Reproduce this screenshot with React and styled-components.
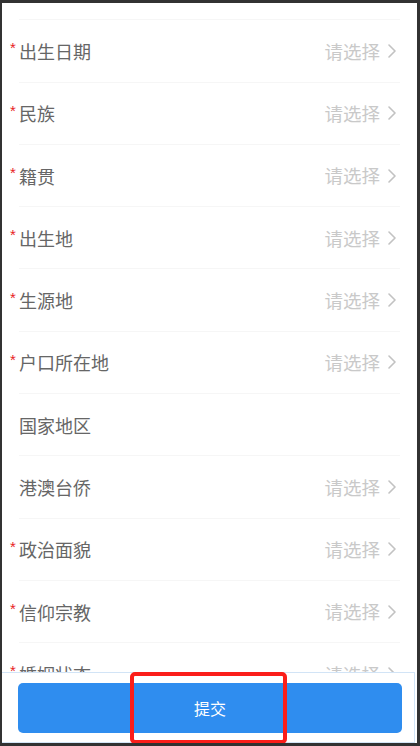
import React, { useLayoutEffect, useRef } from 'react';
import styled, { createGlobalStyle } from 'styled-components';

const GlobalStyle = createGlobalStyle`
    html, body {
        margin: 0;
        padding: 0;
        background-color: #323232;
    }
    * {
        box-sizing: border-box;
    }
`;

const Screen = styled.div`
    position: relative;
    height: 100vh;
    display: flex;
    flex-direction: column;
    background-color: #fff;
    border-style: solid;
    border-color: #323232;
    border-width: 3px 3px 3px 2px;
    font-family: "Noto Sans CJK SC", "Noto Sans", sans-serif;
    overflow: hidden;
`;

const FormList = styled.div`
    flex: 1;
    overflow-y: auto;
    scrollbar-width: none;

    &::-webkit-scrollbar {
        display: none;
    }
`;

const RowWrap = styled.div`
    padding: 0 17px 0 16.5px;
`;

const Row = styled.div`
    height: 62.3px;
    display: flex;
    align-items: center;
    padding: 0 4px 0 0.5px;
    border-bottom: 1px solid #f6f6f6;
`;

const Label = styled.div`
    flex: 1;
    display: flex;
    align-items: center;
    font-size: 18px;
    color: #666;
    line-height: 1;
`;

const Star = styled.span`
    display: inline-block;
    width: 9px;
    margin-left: -9px;
    margin-top: -6px;
    font-size: 15px;
    color: #e8221d;
    line-height: 1;
    font-family: "Liberation Sans", sans-serif;
`;

const Value = styled.div`
    display: flex;
    align-items: center;
    gap: 8px;
    font-size: 18.5px;
    color: #c9c9c9;
    line-height: 1;
`;

const Footer = styled.div`
    flex: 0 0 71px;
    margin-right: 2px;
    padding: 10px 12px 9px 16px;
    border: 1px solid #d2e4f6;
    border-left: none;
    background-color: #fff;
`;

const SubmitButton = styled.button`
    width: 100%;
    height: 50px;
    border: none;
    border-radius: 5px;
    background-color: #2f8def;
    color: #fff;
    font-size: 16px;
    font-family: "Noto Sans CJK SC", "Noto Sans", sans-serif;
    padding: 0;
`;

const Highlight = styled.div`
    position: absolute;
    left: 128px;
    top: 669px;
    width: 157px;
    height: 72px;
    border: 4px solid #fb1e1a;
    border-radius: 5px;
    pointer-events: none;
`;

const fields = [
    { label: '性别', required: true, picker: true },
    { label: '出生日期', required: true, picker: true },
    { label: '民族', required: true, picker: true },
    { label: '籍贯', required: true, picker: true },
    { label: '出生地', required: true, picker: true },
    { label: '生源地', required: true, picker: true },
    { label: '户口所在地', required: true, picker: true },
    { label: '国家地区', required: false, picker: false },
    { label: '港澳台侨', required: false, picker: true },
    { label: '政治面貌', required: true, picker: true },
    { label: '信仰宗教', required: true, picker: true },
    { label: '婚姻状态', required: true, picker: true },
    { label: '健康状况', required: true, picker: true },
];

const Chevron = () => (
    <svg width="8" height="14" viewBox="0 0 8 14" fill="none">
        <path d="M1 1l6 6-6 6" stroke="#c2c2c2" strokeWidth="1.6" strokeLinecap="round" strokeLinejoin="round" />
    </svg>
);

const FieldRow = ({ label, required, picker }) => (
    <RowWrap>
        <Row>
            <Label>
                {required && <Star>*</Star>}
                {label}
            </Label>
            {picker && (
                <Value>
                    请选择
                    <Chevron />
                </Value>
            )}
        </Row>
    </RowWrap>
);

const App = () => {
    const listRef = useRef(null);

    useLayoutEffect(() => {
        if (listRef.current) listRef.current.scrollTop = 44.6;
    }, []);

    return (
        <>
            <GlobalStyle />
            <Screen>
                <FormList ref={listRef}>
                    {fields.map(f => (
                        <FieldRow key={f.label} {...f} />
                    ))}
                </FormList>
                <Footer>
                    <SubmitButton>提交</SubmitButton>
                </Footer>
                <Highlight />
            </Screen>
        </>
    );
};

export default App;
